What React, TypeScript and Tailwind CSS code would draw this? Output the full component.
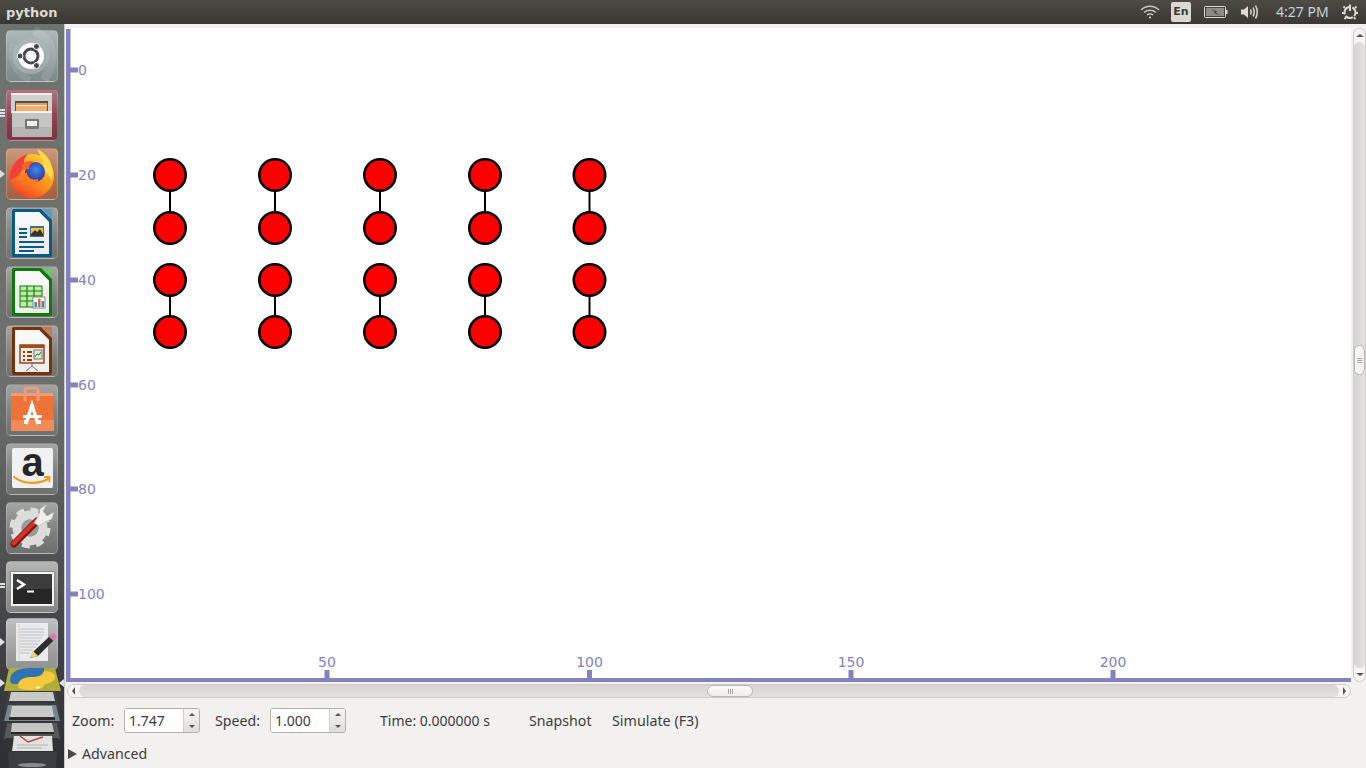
import React from "react";

const SANS = "font-['Noto_Sans',sans-serif]";

function Tile({ bg, children, className = "" }: { bg: string; children: React.ReactNode; className?: string }) {
  return (
    <div className={`relative w-[52px] h-[52px] rounded-[5px] shrink-0 ${bg} ${className}`}>
      <div className="absolute inset-0 rounded-[5px] border border-white/20 bg-gradient-to-b from-white/30 via-white/5 to-black/10" />
      <svg viewBox="0 0 52 52" className="absolute inset-0 w-[52px] h-[52px] overflow-visible">{children}</svg>
    </div>
  );
}

function Doc({ border, corner, children }: { border: string; corner: string; children: React.ReactNode }) {
  return (
    <>
      <path d="M6 4Q6 2 8 2H35L46 13V48Q46 50 44 50H8Q6 50 6 48Z" fill={border} />
      <path d="M36 2H45Q46 2 46 3V12Z" fill={corner} />
      <path d="M9 5H33L43 15V47H9Z" fill="#eeeeee" />
      <path d="M9 5H33L43 15V20H9Z" fill="#f8f8f8" />
      {children}
    </>
  );
}

const Ubuntu = () => (
  <>
    <path d="M28 1C47 8 52 30 38 50" fill="none" stroke="#fff" strokeOpacity="0.12" strokeWidth="9" />
    <path d="M8 14C3 28 10 44 24 50" fill="none" stroke="#fff" strokeOpacity="0.1" strokeWidth="7" />
    <circle cx="25" cy="26" r="18" fill="#b3bdbe" opacity="0.55" />
    <circle cx="25" cy="26" r="13" fill="#fff" />
    <circle cx="25" cy="26" r="7" fill="none" stroke="#44484a" strokeWidth="3" />
    <circle cx="30.500" cy="16.500" r="3" fill="#44484a" stroke="#fff" />
    <circle cx="30.500" cy="35.500" r="3" fill="#44484a" stroke="#fff" />
    <circle cx="14" cy="26" r="3" fill="#44484a" stroke="#fff" />
  </>
);

const Files = () => (
  <>
    <path d="M5 7Q5 4 8 4H43Q46 4 46 7V24H5Z" fill="#cfcfcd" />
    <rect x="5" y="4" width="41" height="2" fill="#eeeeec" />
    <rect x="9" y="12" width="33" height="11" fill="#55504a" />
    <rect x="10" y="14" width="31" height="4" fill="#e59a58" />
    <rect x="10" y="16" width="31" height="1" fill="#fff2dc" />
    <rect x="10" y="17" width="31" height="6" fill="#f2b070" />
    <rect x="6" y="22" width="40" height="26" rx="1" fill="#c4c4c2" />
    <rect x="6" y="22" width="40" height="2" fill="#f4f4f2" />
    <rect x="6" y="38" width="40" height="10" fill="#a9a9a7" opacity="0.55" />
    <rect x="19" y="30" width="14" height="10" rx="1" fill="#77777a" />
    <rect x="21" y="32" width="10" height="5" fill="#f0f0f0" />
  </>
);

const Firefox = () => (
  <>
    <defs>
      <linearGradient id="ff1" x1="0.8" y1="0" x2="0.2" y2="1">
        <stop offset="0" stopColor="#ffd22f" />
        <stop offset="0.55" stopColor="#ff8f1c" />
        <stop offset="1" stopColor="#f5372e" />
      </linearGradient>
      <radialGradient id="ff2" cx="0.55" cy="0.4" r="0.6">
        <stop offset="0" stopColor="#3f8cf0" />
        <stop offset="1" stopColor="#2b2f93" />
      </radialGradient>
    </defs>
    <circle cx="26" cy="28" r="22" fill="url(#ff1)" />
    <path d="M4 32C3 20 10 9 22 6C17 11 17 14 20 17L12 28Z" fill="#f23e3c" />
    <path d="M31 1C42 6 49 18 46 32L37 20C39 13 34 8 31 1Z" fill="#ffdc45" />
    <circle cx="29" cy="24" r="10" fill="url(#ff2)" />
    <path d="M12 26C15 39 30 41 38 30C36 35 30 37 25 35C30 35 33 33 32 31C27 33 21 30 21 24C18 27 14 25 12 26Z" fill="#ff7a1f" />
    <path d="M16 17C20 13 24 12 28 14C24 16 23 18 23 21L15 22Z" fill="#f8602c" />
  </>
);

const Writer = () => (
  <Doc border="#0b5a86" corner="#5b9bbd">
    <rect x="24" y="19" width="14" height="11" fill="#3f6f93" />
    <path d="M25 21H37V27H25Z" fill="#f3c146" />
    <path d="M25 29V27L29 23L31 25L34 22L37 27V29Z" fill="#333" />
    <path d="M13 22H21M13 26H21M13 30H21M13 35H38M13 40H38M13 44H28" stroke="#0b5a86" strokeWidth="2" />
  </Doc>
);

const Calc = () => (
  <Doc border="#0c7a0c" corner="#6fc06f">
    <rect x="14" y="20" width="22" height="21" fill="#c3e9a6" stroke="#0a800a" />
    <path d="M14 25H36M14 30H36M14 35H36M21 20V41M28 20V41" stroke="#0a800a" strokeWidth="1.200" />
    <rect x="27" y="31" width="12" height="11" fill="#f4f4f4" stroke="#888" />
    <rect x="28.500" y="36" width="2.500" height="5" fill="#2f8dd6" />
    <rect x="32" y="33" width="2.500" height="8" fill="#e66a1e" />
    <rect x="35.500" y="35" width="2.500" height="6" fill="#2f8dd6" />
  </Doc>
);

const Impress = () => (
  <Doc border="#7a3109" corner="#c07a55">
    <rect x="14" y="20" width="24" height="18" fill="#f6ebe0" stroke="#8e3d10" strokeWidth="1.400" />
    <rect x="14" y="20" width="24" height="3" fill="#a34a16" />
    <path d="M17 27H19M17 31H19M17 35H19M21 27H26M21 31H26M21 35H26" stroke="#8e3d10" strokeWidth="2" />
    <rect x="28" y="25" width="8" height="9" fill="#d8ead6" stroke="#777" />
    <path d="M29 32L31 29L33 30L35 27" fill="none" stroke="#2b8f2b" />
    <path d="M26 38V41L20 46M26 41L32 46" fill="none" stroke="#777" />
  </Doc>
);

const Store = () => (
  <>
    <path d="M5 9H47L48 47H5Z" fill="#ef7236" />
    <path d="M5 9H47V12H5Z" fill="#f59b74" />
    <path d="M5 36H48V47H5Z" fill="#f28a58" />
    <path d="M19 17V7Q19 4 22 4H29Q32 4 32 7V17" fill="none" stroke="#f29a78" strokeWidth="3" />
    <path d="M20 40L26 21L32 40" fill="none" stroke="#fff" strokeWidth="3.500" />
    <rect x="17" y="31" width="19" height="3" fill="#fff" />
    <rect x="18" y="36" width="4" height="4" fill="#fff" />
    <rect x="31" y="36" width="4" height="4" fill="#fff" />
  </>
);

const Amazon = () => (
  <>
    <rect x="6" y="5" width="41" height="40" rx="2" fill="#f1f1f1" />
    <text x="26.500" y="33" textAnchor="middle" fontFamily="'Liberation Sans',sans-serif" fontWeight="700" fontSize="40" fill="#262626">a</text>
    <path d="M8 34C18 42 33 41 42 36" fill="none" stroke="#f59a14" strokeWidth="2.200" strokeLinecap="round" />
    <path d="M38 34H43.500V39" fill="none" stroke="#f59a14" strokeWidth="1.800" />
  </>
);

const Settings = () => (
  <>
    <circle cx="24" cy="26" r="17.500" fill="none" stroke="#dededc" strokeWidth="6" strokeDasharray="7.500 6.244" />
    <circle cx="24" cy="26" r="13" fill="none" stroke="#dcdcda" strokeWidth="9" />
    <circle cx="24" cy="26" r="8.500" fill="#9a9a98" />
    <path d="M8 42L31 19" stroke="#7d1512" strokeWidth="7" strokeLinecap="round" />
    <path d="M7.500 41.500L31 18" stroke="#d8322c" strokeWidth="4" strokeLinecap="round" />
    <path d="M28 21L33 13L34 7L41 2L37 9L41 14L48 10L46 17L39 20L33 24Z" fill="#efefed" stroke="#a5a5a3" strokeWidth="0.500" />
  </>
);

const Terminal = () => (
  <>
    <rect x="4" y="10" width="45" height="37" fill="#8b8b8b" />
    <rect x="5" y="11" width="43" height="34" fill="#f4f4f4" />
    <rect x="7" y="13" width="39" height="30" fill="#262626" />
    <rect x="7" y="13" width="39" height="15" fill="#3c3c3c" />
    <path d="M11 19L18 23.500L11 28" fill="none" stroke="#fff" strokeWidth="2.500" />
    <path d="M21 30.500H28" stroke="#fff" strokeWidth="2" />
  </>
);

const Editor = () => (
  <>
    <rect x="10" y="5" width="32" height="38" fill="#e8eaec" />
    <path d="M14 11H38M14 14H38M14 17H38M14 20H36M14 23H34M14 26H32M14 29H30M14 32H27M14 35H24" stroke="#b8b8c0" strokeWidth="0.800" />
    <path d="M13 6V42" stroke="#d98a8a" strokeWidth="0.600" opacity="0.6" />
    <path d="M28 33L44 18L48 22L32 38L24 40Z" fill="#2d2d2d" />
    <path d="M43 19L46 15.500Q47.500 14.500 49 16L51 18Q51.500 19.500 50 20.500L47.500 23Z" fill="#d27fb0" />
    <path d="M27 33L32 38L24 40Z" fill="#ecd36a" />
  </>
);

function Launcher() {
  return (
    <div className="relative w-[65px] h-[744px] shrink-0 overflow-hidden bg-gradient-to-b from-[#6f736f] via-[#6b6e6b] to-[#2c2e33] border-r border-r-[#c9c9c3]">
      <div className="flex flex-col gap-[7px] pt-[6px] pl-[6px]">
        <Tile bg="bg-[#8e9a9b]"><Ubuntu /></Tile>
        <Tile bg="bg-[#8a3c4b]"><Files /></Tile>
        <Tile bg="bg-[#b36f4b]"><Firefox /></Tile>
        <Tile bg="bg-[#7d7f7d]"><Writer /></Tile>
        <Tile bg="bg-[#7d7f7d]"><Calc /></Tile>
        <Tile bg="bg-[#7d7f7d]"><Impress /></Tile>
        <Tile bg="bg-[#7d7f7d]"><Store /></Tile>
        <Tile bg="bg-[#7d7f7d]"><Amazon /></Tile>
        <Tile bg="bg-[#7d7f7d]"><Settings /></Tile>
        <Tile bg="bg-[#949694]"><Terminal /></Tile>
        <Tile bg="bg-[#a4a4a4]" className="-mt-[2px]"><Editor /></Tile>
      </div>
      {/* python tile and the folded stack below it */}
      <svg viewBox="0 0 65 100" className="absolute left-0 top-[644px] w-[65px] h-[100px]">
        <path d="M9 0H55L61 23H4Z" fill="#b1ad3a" />
        <path d="M10 12C10 4 18 0 30 0H44V7C40 9 36 9 30 9C24 9 20 11 18 16H14C11 16 10 14 10 12Z" fill="#2f72b5" />
        <path d="M18 17C19 11 26 9 34 9C40 9 43 6 44 3C52 3 55 6 55 9C55 14 48 15 44 17C44 20 38 22 30 22C22 22 18 21 18 17Z" fill="#f6c93c" />
        <ellipse cx="38" cy="19.500" rx="2" ry="1" fill="#fff" />
        <path d="M8 24H56L59 40H5Z" fill="#3f4244" opacity="0.75" />
        <path d="M11 24H53L55 33H9Z" fill="#c8c8c6" />
        <rect x="9" y="33" width="46" height="2" fill="#3a3a3a" />
        <path d="M8 37H56L60 53H4Z" fill="#76878b" />
        <path d="M12 38H52L54 49H10Z" fill="#c9c9c7" />
        <rect x="9" y="49" width="46" height="3" fill="#2e2e2e" />
        <path d="M7 55H57L60 71H4Z" fill="#55585b" />
        <path d="M12 55H52L54 64H11Z" fill="#c4c4c2" />
        <rect x="11" y="64" width="43" height="2" fill="#262626" />
        <path d="M6 70H58L61 86H3Z" fill="#2f3236" />
        <path d="M14 68H52L53 83H12Z" fill="#e2e2e2" />
        <path d="M20 68L28 74L43 69" fill="none" stroke="#c93a3a" strokeWidth="1.500" />
        <path d="M17 77H48M17 80H42" stroke="#b5b5b5" />
        <path d="M8 84H57L56 100H9Z" fill="#3a3d42" />
        <ellipse cx="32" cy="97" rx="14" ry="2" fill="#8a8d8f" />
      </svg>
      {/* running-app pips */}
      <div className="absolute left-0 top-[85px] w-[5px] flex flex-col gap-[1px]">
        <div className="h-[2px] bg-[#dfdfdf]" />
        <div className="h-[2px] bg-[#dfdfdf]" />
        <div className="h-[2px] bg-[#dfdfdf]" />
      </div>
      <div className="absolute left-0 top-[146px] w-0 h-0 border-y-[4px] border-y-transparent border-l-[5px] border-l-[#dfdfdf]" />
      <div className="absolute left-0 top-[559px] w-[5px] flex flex-col gap-[1px]">
        <div className="h-[2px] bg-[#dfdfdf]" />
        <div className="h-[2px] bg-[#dfdfdf]" />
      </div>
      <div className="absolute left-0 top-[614px] w-0 h-0 border-y-[4px] border-y-transparent border-l-[5px] border-l-[#dfdfdf]" />
      <div className="absolute left-0 top-[655px] w-0 h-0 border-y-[4px] border-y-transparent border-l-[5px] border-l-[#dfdfdf]" />
      <div className="absolute right-0 top-[655px] w-0 h-0 border-y-[4px] border-y-transparent border-r-[5px] border-r-[#dfdfdf]" />
    </div>
  );
}

function TopBar() {
  return (
    <div className="h-6 shrink-0 flex items-center bg-gradient-to-b from-[#4d4b44] to-[#393834] text-[#dfdbd2]">
      <span className="ml-[6px] font-['DejaVu_Sans',sans-serif] font-bold text-[13px] leading-none">python</span>
      <div className="ml-auto flex items-center">
        <svg viewBox="0 0 20 14" className="w-5 h-[14px]" fill="none" stroke="#dfdbd2" strokeWidth="1.400">
          <path d="M1 5C6 0 14 0 19 5" opacity="0.85" />
          <path d="M4 7.500C7.500 4.500 12.500 4.500 16 7.500" opacity="0.85" />
          <path d="M7 10C9 8.500 11 8.500 13 10" />
          <circle cx="10" cy="12.500" r="1" fill="#dfdbd2" stroke="none" />
        </svg>
        <div className="ml-[11px] w-5 h-[20px] rounded-[2px] bg-[#dcd9d3] flex items-center justify-center font-['DejaVu_Sans',sans-serif] text-[11px] font-semibold text-[#3a3935]">En</div>
        <svg viewBox="0 0 24 12" className="ml-[13px] w-6 h-3">
          <rect x="0.500" y="0.500" width="21" height="11" rx="1" fill="none" stroke="#dfdbd2" />
          <rect x="2" y="2" width="18" height="8" fill="#8d8b85" />
          <path d="M7 3L13 5.500L11.500 6.500L16 9L10 7L11.500 6Z" fill="#2f2e2a" />
          <rect x="22" y="4" width="1.500" height="4" fill="#dfdbd2" />
        </svg>
        <svg viewBox="0 0 20 16" className="ml-[12px] w-5 h-4" fill="none" stroke="#dfdbd2" strokeWidth="1.500">
          <path d="M1 5.500H4L8 2V14L4 10.500H1Z" fill="#dfdbd2" stroke="none" />
          <path d="M10.500 5.500Q12 8 10.500 10.500" />
          <path d="M13 3.500Q15.500 8 13 12.500" />
          <path d="M15.500 1.500Q19 8 15.500 14.500" />
        </svg>
        <span className={`ml-[16px] w-[53px] text-[14px] leading-none text-[#c6d3e0] whitespace-nowrap ${SANS}`}>4:27 PM</span>
        <svg viewBox="0 0 16 16" className="ml-[13px] mr-2 w-4 h-4" fill="none" stroke="#dfdbd2">
          <circle cx="8" cy="8.500" r="5.500" strokeWidth="2" strokeDasharray="10 1.500 8 1.500 10 4" transform="rotate(-65 8 8.500)" />
          <path d="M8 0.500V7" strokeWidth="2" />
          <path d="M1.500 2.500L3 4M14.500 2.500L13 4M0 9H2M14 9H16M2.500 15L4 13.500M13.500 15L12 13.500" strokeWidth="1.800" />
        </svg>
      </div>
    </div>
  );
}

const nodesX = [170, 275, 380, 485, 589.5];
const yTicks = [
  [70, "0"],
  [175, "20"],
  [280, "40"],
  [385, "60"],
  [489, "80"],
  [594, "100"],
] as const;
const xTicks = [
  [327, "50"],
  [589.5, "100"],
  [851, "150"],
  [1113, "200"],
] as const;
const AXIS = "#8481c0";

function Canvas() {
  return (
    <div className="mt-1 ml-px w-[1285px] h-[654px] bg-white">
      <svg viewBox="66 28 1285 654" className="block w-[1285px] h-[654px]">
        <rect x="66" y="29" width="4.500" height="653" fill={AXIS} />
        <rect x="66" y="678" width="1285" height="4" fill={AXIS} />
        {yTicks.map(([y, t]) => (
          <g key={t}>
            <rect x="70" y={y - 2.5} width="8" height="5" fill={AXIS} />
            <text x="78" y={y + 5} fontFamily="'DejaVu Sans',sans-serif" fontSize="14" fill="#8080cc">{t}</text>
          </g>
        ))}
        {xTicks.map(([x, t]) => (
          <g key={t}>
            <rect x={x - 2.5} y="670" width="5" height="8" fill={AXIS} />
            <text x={x} y="667" textAnchor="middle" fontFamily="'DejaVu Sans',sans-serif" fontSize="14" fill="#8080cc">{t}</text>
          </g>
        ))}
        {nodesX.map((x) =>
          [
            [175, 228],
            [280, 332],
          ].map(([a, b]) => (
            <g key={`${x}-${a}`}>
              <line x1={x} y1={a} x2={x} y2={b} stroke="#000" strokeWidth="2" />
              <circle cx={x} cy={a} r="15.700" fill="#ff0000" stroke="#000" strokeWidth="2.600" />
              <circle cx={x} cy={b} r="15.700" fill="#ff0000" stroke="#000" strokeWidth="2.600" />
            </g>
          ))
        )}
      </svg>
    </div>
  );
}

function VScroll() {
  return (
    <div className="ml-[2px] mt-1 w-[13px] h-[654px] rounded-full border border-[#cfcdc9] bg-[#f6f5f4] flex flex-col items-center overflow-hidden">
      <div className="h-[13px] w-full flex items-center justify-center shrink-0">
        <div className="w-0 h-0 border-x-[4px] border-x-transparent border-b-[3px] border-b-[#55534f]" />
      </div>
      <div className="flex-1 w-full bg-gradient-to-r from-[#d6d5d2] to-[#e2e1df] rounded-full flex flex-col">
        <div className="h-[303px] shrink-0" />
        <div className="h-[30px] w-[11px] rounded-full bg-gradient-to-r from-[#fbfbfa] to-[#eeedeb] border border-[#b9b7b3] shrink-0 flex flex-col items-center justify-center gap-[1px]">
          <div className="w-[5px] h-px bg-[#a9a7a3]" />
          <div className="w-[5px] h-px bg-[#a9a7a3]" />
          <div className="w-[5px] h-px bg-[#a9a7a3]" />
        </div>
      </div>
      <div className="h-[13px] w-full flex items-center justify-center shrink-0">
        <div className="w-0 h-0 border-x-[4px] border-x-transparent border-t-[3px] border-t-[#55534f]" />
      </div>
    </div>
  );
}

function HScroll() {
  return (
    <div className="mt-[2px] ml-[2px] w-[1284px] h-[14px] rounded-full border border-[#cfcdc9] bg-[#f6f5f4] flex items-center overflow-hidden">
      <div className="w-[11px] h-full flex items-center justify-center shrink-0">
        <div className="w-0 h-0 border-y-[4px] border-y-transparent border-r-[3px] border-r-[#55534f]" />
      </div>
      <div className="flex-1 h-full rounded-full bg-gradient-to-b from-[#d6d5d2] to-[#e2e1df] flex">
        <div className="w-[628px] shrink-0" />
        <div className="w-[46px] h-full rounded-full bg-gradient-to-b from-[#fbfbfa] to-[#eeedeb] border border-[#b9b7b3] shrink-0 flex items-center justify-center gap-[1px]">
          <div className="h-[5px] w-px bg-[#a9a7a3]" />
          <div className="h-[5px] w-px bg-[#a9a7a3]" />
          <div className="h-[5px] w-px bg-[#a9a7a3]" />
        </div>
      </div>
      <div className="w-[11px] h-full flex items-center justify-center shrink-0">
        <div className="w-0 h-0 border-y-[4px] border-y-transparent border-l-[3px] border-l-[#55534f]" />
      </div>
    </div>
  );
}

function Spin({ value }: { value: string }) {
  return (
    <div className="w-[76px] h-[25px] flex rounded-[3px] border border-[#b5b2ac] overflow-hidden shrink-0">
      <div className="w-[59px] bg-white pl-[4px] flex items-center text-[14px] text-[#3c3c3c] border-r border-r-[#cfcdc9]">{value}</div>
      <div className="flex-1 flex flex-col bg-gradient-to-b from-[#f7f6f5] to-[#dedcd9]">
        <div className="flex-1 flex items-center justify-center">
          <div className="w-0 h-0 border-x-[3px] border-x-transparent border-b-[3px] border-b-[#55534f]" />
        </div>
        <div className="flex-1 flex items-center justify-center">
          <div className="w-0 h-0 border-x-[3px] border-x-transparent border-t-[3px] border-t-[#55534f]" />
        </div>
      </div>
    </div>
  );
}

function Controls() {
  return (
    <div className={`text-[14.2px] text-[#3c3c3c] ${SANS}`}>
      <div className="mt-[10px] pl-[7px] h-[25px] flex items-center">
        <span className="w-[52px]">Zoom:</span>
        <Spin value="1.747" />
        <span className="ml-[15px] w-[55px]">Speed:</span>
        <Spin value="1.000" />
        <span className="ml-[34px] w-[149px] whitespace-nowrap text-[14px]">Time: 0.000000 s</span>
        <span className="w-[83px]">Snapshot</span>
        <span className="whitespace-nowrap text-[14.3px]">Simulate (F3)</span>
      </div>
      <div className="mt-[9px] pl-[3px] h-[24px] flex items-center">
        <div className="w-0 h-0 border-y-[5px] border-y-transparent border-l-[9px] border-l-[#4a4a4a]" />
        <span className="ml-[5px]">Advanced</span>
      </div>
    </div>
  );
}

export default function App() {
  return (
    <div className="w-[1366px] h-[768px] overflow-hidden flex flex-col bg-[#f2f1f0]">
      <TopBar />
      <div className="flex flex-1 min-h-0">
        <Launcher />
        <div className="flex-1 flex flex-col">
          <div className="flex">
            <Canvas />
            <VScroll />
          </div>
          <HScroll />
          <Controls />
        </div>
      </div>
    </div>
  );
}
